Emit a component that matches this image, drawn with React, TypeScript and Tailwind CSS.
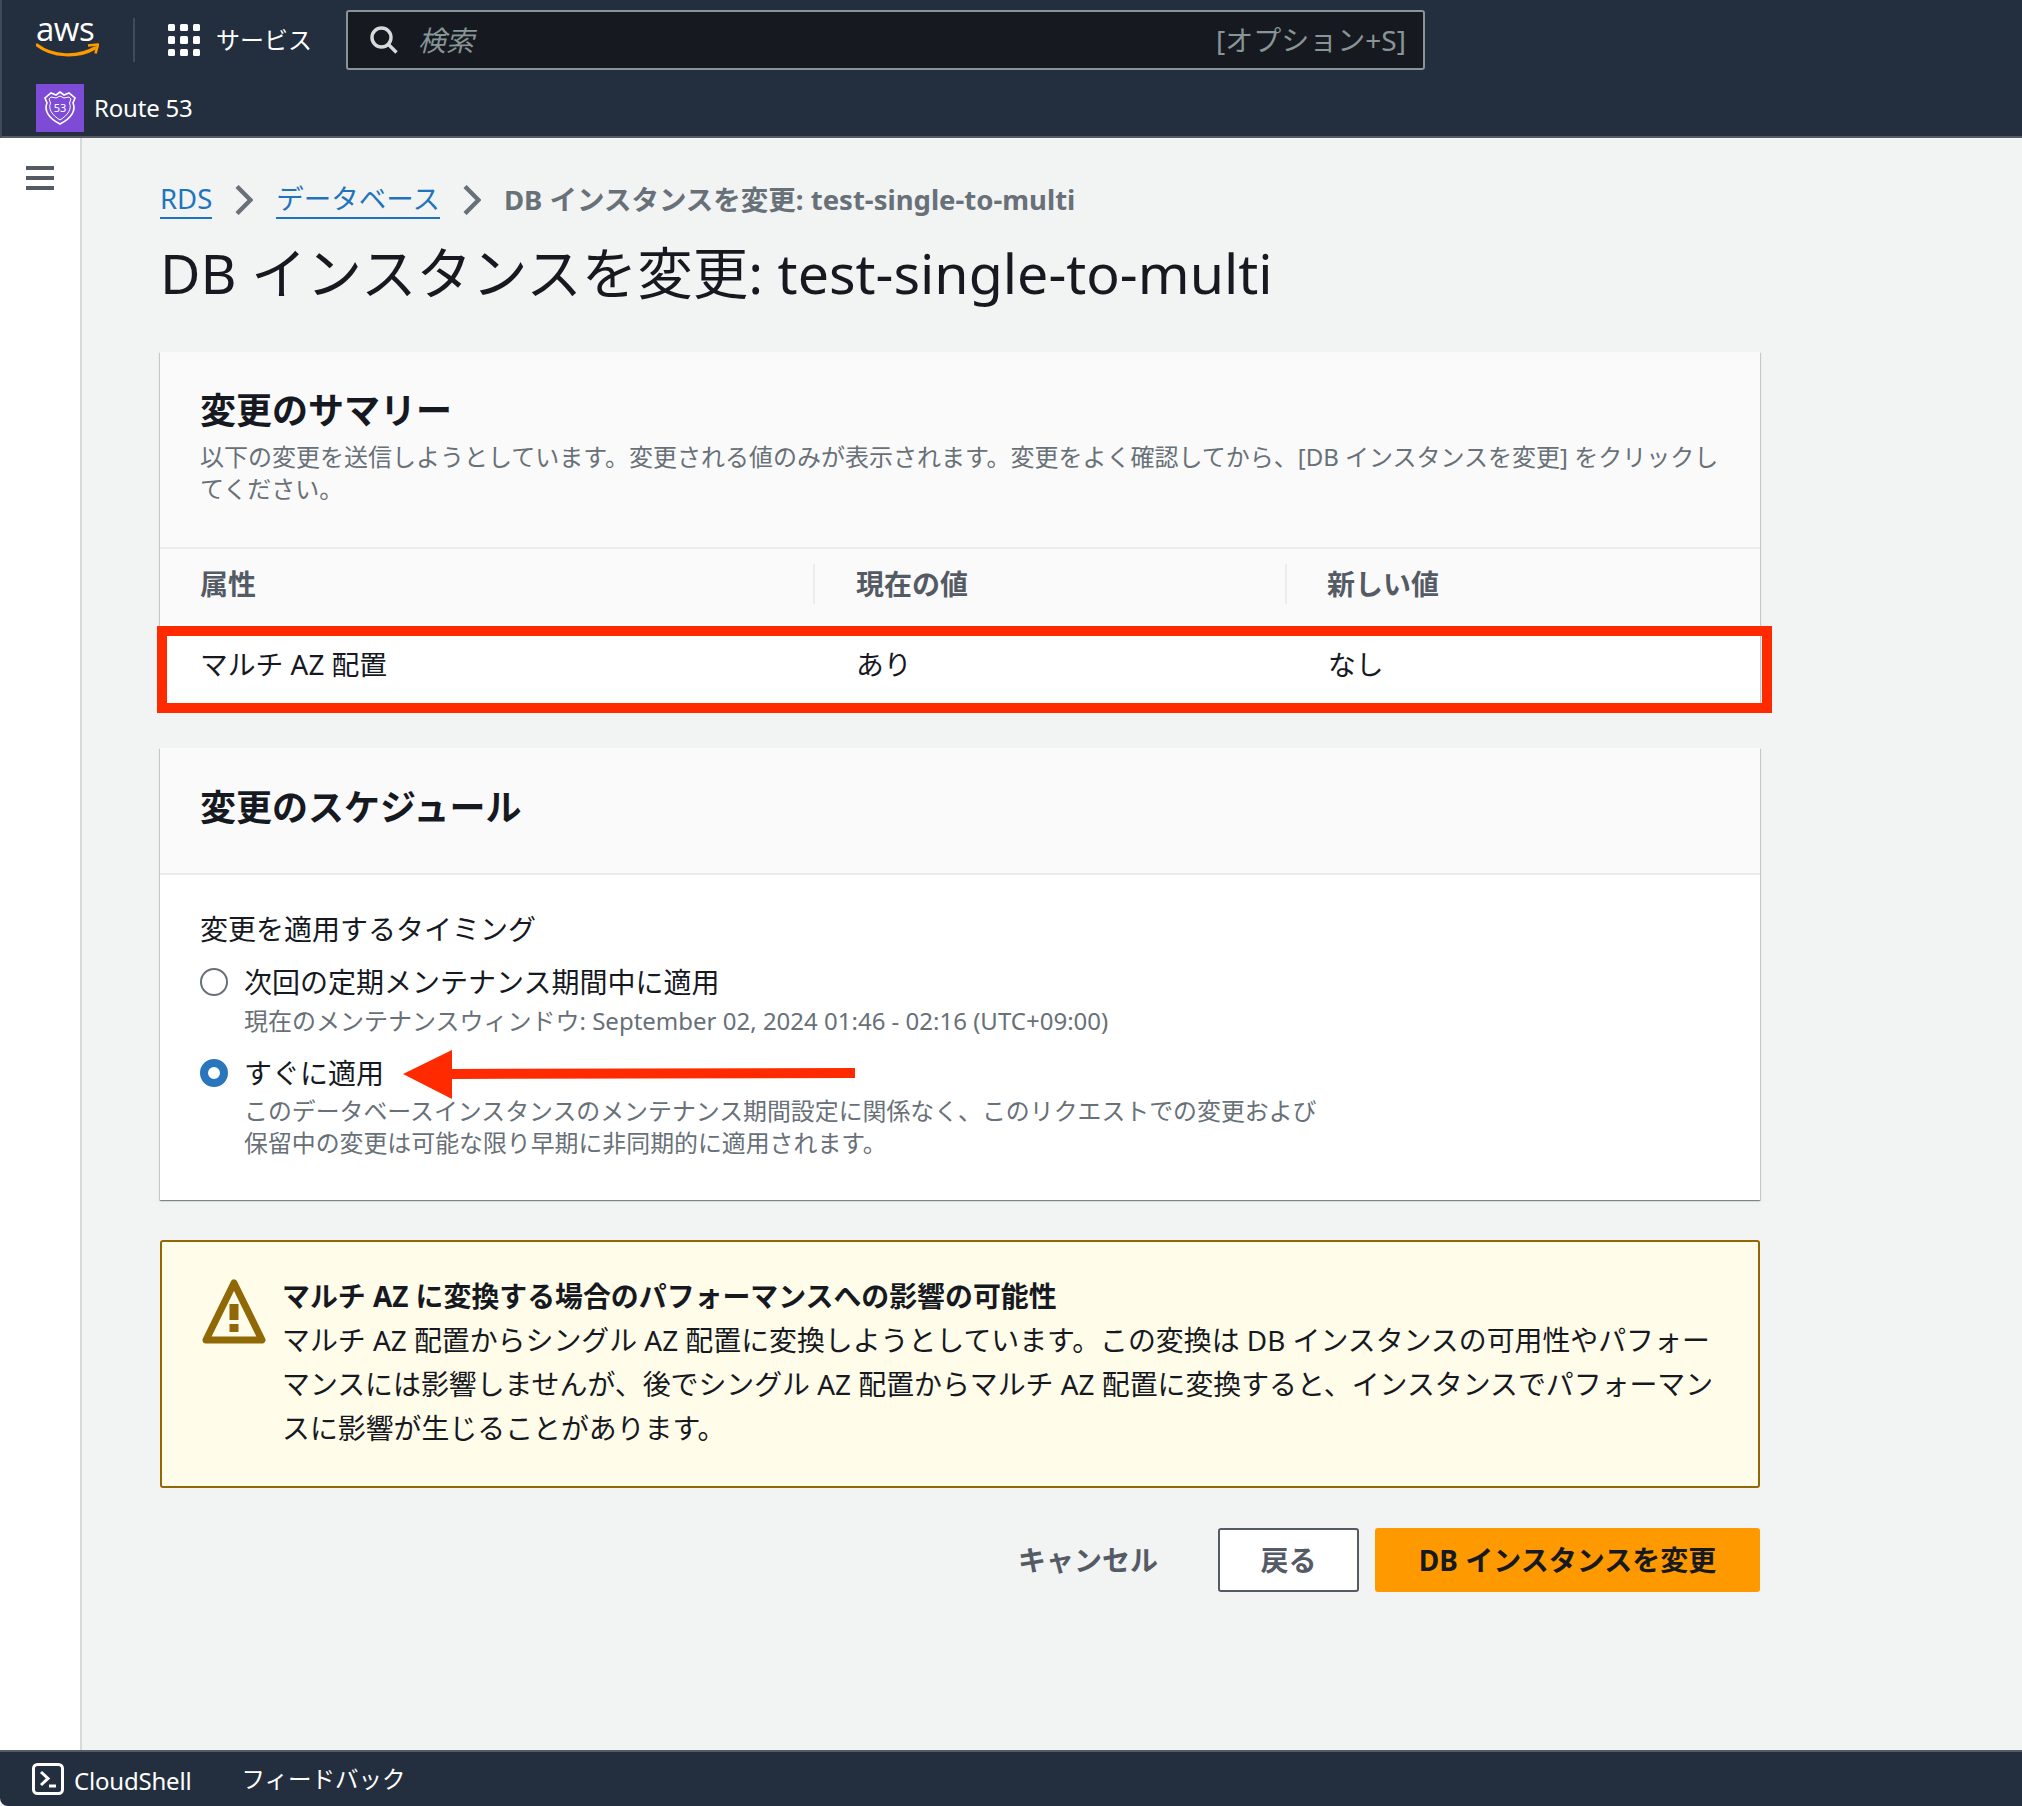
import React from "react";

const Chevron = () => (
  <svg width="18" height="30" viewBox="0 0 18 30" className="shrink-0" fill="none" stroke="#687078" strokeWidth="4.4">
    <path d="M2 1.5 L15.5 15 L2 28.5" />
  </svg>
);

const Radio = ({ on }: { on?: boolean }) =>
  on ? (
    <span className="block w-[28px] h-[28px] rounded-full border-[8px] border-[#2a76bd] bg-white shrink-0" />
  ) : (
    <span className="block w-[28px] h-[28px] rounded-full border-2 border-[#687078] bg-white shrink-0" />
  );

export default function App() {
  return (
    <div className="w-[2022px] h-[1806px] flex flex-col overflow-hidden bg-[#f2f3f3] font-['Noto_Sans','Noto_Sans_CJK_JP',sans-serif] text-[#16191f]">
      <header className="h-[138px] shrink-0 bg-[#232f3e] border-b-2 border-[#545b64] flex flex-col border-l-2 border-l-[#3f4a57]">
        <div className="h-[80px] flex items-start pt-[10px]">
          <div className="w-[63px] ml-[34px] mt-[6px] h-[46px] relative shrink-0">
            <span className="absolute left-0 -top-[7px] text-white font-['Open_Sans',sans-serif] text-[33px] leading-[40px] tracking-[-0.5px]">aws</span>
            <svg viewBox="0 0 63 16" width="63" height="16" className="absolute left-0 top-[27px]" fill="none">
              <path d="M1 2 C16 14 42 15 59 5" stroke="#ff9900" strokeWidth="3.2" strokeLinecap="round" />
              <path d="M52 2.5 L62 1.5 L59.5 10.5" stroke="#ff9900" strokeWidth="2.6" strokeLinejoin="round" />
            </svg>
          </div>
          <div className="w-[2px] h-[44px] mt-[8px] ml-[34px] bg-[#3f4b5a] shrink-0" />
          <div className="ml-[33px] mt-[14px] grid grid-cols-3 gap-[5px] shrink-0">
            {[0, 1, 2, 3, 4, 5, 6, 7, 8].map((i) => (
              <span key={i} className="block w-[7.3px] h-[7.3px] bg-white rounded-[1.5px]" />
            ))}
          </div>
          <div className="ml-[16px] mt-[12px] text-white text-[24px] leading-[36px] w-[132px]">サービス</div>
          <div className="w-[1079px] h-[60px] bg-[#16191f] border-2 border-[#879596] rounded-[3px] flex items-center pl-[22px] pr-[17px] shrink-0 -ml-[2px]">
            <svg width="28" height="28" viewBox="0 0 28 28" fill="none" stroke="#d5dbdb" strokeWidth="3.4" className="shrink-0">
              <circle cx="11.5" cy="11.5" r="9.5" />
              <path d="M18 18 L26.5 26.5" />
            </svg>
            <span className="ml-[20px] text-[#879596] italic text-[28px] leading-[36px]">検索</span>
            <span className="ml-auto text-[#879596] text-[28px] leading-[36px]">[オプション+S]</span>
          </div>
        </div>
        <div className="flex items-center ml-[34px] h-[48px] mt-[4px]">
          <div className="w-[48px] h-[48px] bg-[#7d4bd6] shrink-0 flex items-center justify-center">
            <svg width="36" height="36" viewBox="0 0 36 36" fill="none" stroke="#ffffff" strokeWidth="1.6">
              <path d="M18 2 L22 5 L27 3 L33 8 L31 13 C34 20 30 28 18 34 C6 28 2 20 5 13 L3 8 L9 3 L14 5 Z" />
              <path d="M18 6 L22 8 L27 7 L29 9 L27.500 13 C30 19 26 25 18 30 C10 25 6 19 8.500 13 L7 9 L9 7 L14 8 Z" strokeWidth="1" />
              <text x="18" y="22" textAnchor="middle" fontSize="11" fill="#ffffff" stroke="none" fontFamily="Noto Sans">53</text>
            </svg>
          </div>
          <span className="ml-[10px] text-white text-[24px] leading-[32px] tracking-[-0.2px]">Route 53</span>
        </div>
      </header>

      <div className="flex-1 flex min-h-0">
        <aside className="w-[82px] shrink-0 bg-white border-r-2 border-[#d5dbdb] pt-[28px] pl-[26px]">
          <div className="w-[28px] flex flex-col gap-[6px]">
            <span className="block h-[4px] bg-[#545b64]" />
            <span className="block h-[4px] bg-[#545b64]" />
            <span className="block h-[4px] bg-[#545b64]" />
          </div>
        </aside>

        <main className="flex-1 pl-[78px] pt-[42px]">
          <nav className="h-[40px] flex items-center text-[27.5px] leading-[36px]">
            <a className="text-[#1f74bd] border-b-2 border-[#1f74bd] leading-[36px]">RDS</a>
            <span className="ml-[23px] mr-[23px]"><Chevron /></span>
            <a className="text-[#1f74bd] border-b-2 border-[#1f74bd] leading-[36px]">データベース</a>
            <span className="ml-[23px] mr-[23px]"><Chevron /></span>
            <span className="text-[#687078] font-bold">DB インスタンスを変更: test-single-to-multi</span>
          </nav>
          <h1 className="mt-[18px] h-[70px] text-[55.5px] leading-[70px] font-normal">DB インスタンスを変更: test-single-to-multi</h1>

          <section className="relative mt-[44px] w-[1600px] bg-white shadow-[0_1px_1px_0_rgba(0,28,36,0.3),1px_1px_1px_0_rgba(0,28,36,0.15),-1px_1px_1px_0_rgba(0,28,36,0.15)]">
            <div className="h-[197px] bg-[#fafafa] border-b-2 border-[#eaeded] px-[40px] pt-[37px]">
              <h2 className="text-[36px] leading-[44px] font-bold">変更のサマリー</h2>
              <p className="mt-[8px] text-[24px] leading-[32px] text-[#687078]">
                以下の変更を送信しようとしています。変更される値のみが表示されます。変更をよく確認してから、[DB インスタンスを変更] をクリックし
                <br />
                てください。
              </p>
            </div>
            <div className="h-[75px] pb-[5px] bg-[#fafafa] flex items-center text-[28px] font-bold text-[#545b64]">
              <div className="w-[655px] h-[40px] pl-[40px] flex items-center border-r-2 border-[#eaeded]">属性</div>
              <div className="w-[472px] h-[40px] pl-[41px] flex items-center border-r-2 border-[#eaeded]">現在の値</div>
              <div className="pl-[40px]">新しい値</div>
            </div>
            <div className="relative h-[80px] pt-[2px] bg-white flex items-center text-[27.8px]">
              <div className="w-[655px] pl-[40px]">マルチ AZ 配置</div>
              <div className="w-[472px] pl-[41px]">あり</div>
              <div className="pl-[41px]">なし</div>
              <div className="absolute -left-[3px] top-[2px] w-[1615px] h-[87px] border-y-[10px] border-x-[10px] border-[#ff2a00]" />
            </div>
          </section>

          <section className="relative mt-[44px] w-[1600px] bg-white shadow-[0_1px_1px_0_rgba(0,28,36,0.3),1px_1px_1px_0_rgba(0,28,36,0.15),-1px_1px_1px_0_rgba(0,28,36,0.15)] h-[452px]">
            <div className="h-[127px] bg-[#fafafa] border-b-2 border-[#eaeded] px-[40px] pt-[38px]">
              <h2 className="text-[36px] leading-[44px] font-bold">変更のスケジュール</h2>
            </div>
            <div className="px-[40px] pt-[36px]">
              <div className="text-[28px] leading-[36px]">変更を適用するタイミング</div>
              <div className="mt-[17px] flex items-center gap-[16px]">
                <Radio />
                <span className="text-[28px] leading-[36px]">次回の定期メンテナンス期間中に適用</span>
              </div>
              <div className="mt-[5px] pl-[44px] text-[24px] leading-[32px] text-[#687078]">現在のメンテナンスウィンドウ: September 02, 2024 01:46 - 02:16 (UTC+09:00)</div>
              <div className="mt-[18px] flex items-center gap-[16px]">
                <Radio on />
                <span className="text-[28px] leading-[36px]">すぐに適用</span>
              </div>
              <div className="mt-[4px] pl-[44px] text-[23.9px] leading-[32px] text-[#687078]">
                このデータベースインスタンスのメンテナンス期間設定に関係なく、このリクエストでの変更および
                <br />
                保留中の変更は可能な限り早期に非同期的に適用されます。
              </div>
            </div>
            <svg width="452" height="49" viewBox="0 0 452 49" className="absolute left-[243px] top-[302px]">
              <polygon points="0,24 49,0 49,49" fill="#ff2a00" />
              <polygon points="49,19 452,18 452,28 49,29" fill="#ff2a00" />
            </svg>
          </section>

          <section className="mt-[40px] w-[1600px] h-[248px] bg-[#fffce9] border-2 border-[#906806] rounded-[3px] flex pl-[40px] pt-[38px]">
            <svg width="66" height="68" viewBox="0 0 66 68" className="shrink-0 -mt-[2px] -ml-[1px]">
              <path d="M33 5 L61 62 H5 Z" fill="none" stroke="#906806" strokeWidth="7" strokeLinejoin="round" />
              <rect x="28.500" y="26" width="9" height="16" fill="#906806" />
              <rect x="28.500" y="46" width="9" height="8" fill="#906806" />
            </svg>
            <div className="ml-[15px] -mt-[6px] w-[1450px] text-[27.9px] leading-[44px] text-[#16191f]">
              <div className="font-bold">マルチ AZ に変換する場合のパフォーマンスへの影響の可能性</div>
              <div>
                マルチ AZ 配置からシングル AZ 配置に変換しようとしています。この変換は DB インスタンスの可用性やパフォー
                <br />
                マンスには影響しませんが、後でシングル AZ 配置からマルチ AZ 配置に変換すると、インスタンスでパフォーマン
                <br />
                スに影響が生じることがあります。
              </div>
            </div>
          </section>

          <div className="mt-[40px] w-[1600px] flex items-center justify-end text-[28px] font-bold">
            <span className="text-[#545b64] mr-[60px]">キャンセル</span>
            <button className="w-[141px] h-[64px] bg-white border-2 border-[#545b64] rounded-[3px] text-[#545b64]">戻る</button>
            <button className="ml-[16px] w-[385px] h-[64px] bg-[#ff9900] rounded-[3px] text-[#16191f]">DB インスタンスを変更</button>
          </div>
        </main>
      </div>

      <footer className="h-[56px] shrink-0 bg-[#232f3e] border-t-2 border-[#545b64] flex items-center pl-[32px] text-white text-[24px] rounded-bl-[8px]">
        <svg width="32" height="32" viewBox="0 0 32 32" fill="none" stroke="#ffffff" className="shrink-0">
          <rect x="1.500" y="1.500" width="29" height="29" rx="4" strokeWidth="3" />
          <path d="M9 9 L16 15.500 L9 22" strokeWidth="3" />
          <path d="M17 23 H24" strokeWidth="3" />
        </svg>
        <span className="ml-[10px] pt-[3px] tracking-[-0.2px]">CloudShell</span>
        <span className="ml-[50px] pt-[1px] text-[23.5px]">フィードバック</span>
      </footer>
    </div>
  );
}
